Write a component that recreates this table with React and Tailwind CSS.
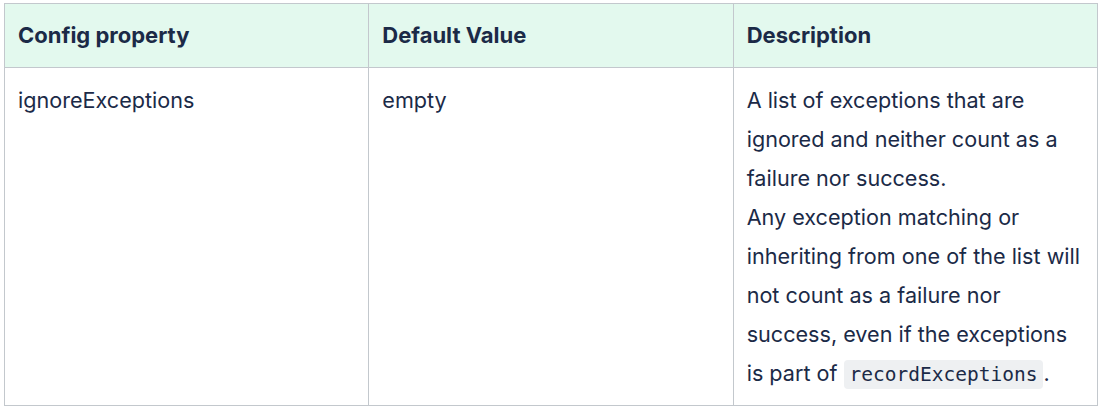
export default function App() {
  return (
    <div className="bg-white w-[1100px] h-[411px] pt-[3px] pl-[4px] font-['Inter',sans-serif] text-[#1b2a47]">
      <table className="w-[1094px] table-fixed border-collapse text-[21.6px] leading-[39px]">
        <thead>
          <tr className="bg-[#e3f9ee]">
            <th className="border border-[#c3c8cd] text-left font-bold text-[22px] px-[13px] py-[12px]">Config property</th>
            <th className="border border-[#c3c8cd] text-left font-bold text-[22px] px-[13px] py-[12px]">Default Value</th>
            <th className="border border-[#c3c8cd] text-left font-bold text-[22px] px-[13px] py-[12px]">Description</th>
          </tr>
        </thead>
        <tbody>
          <tr>
            <td className="border border-[#c3c8cd] align-top px-[13px] pt-[13px] pb-[11px]">ignoreExceptions</td>
            <td className="border border-[#c3c8cd] align-top px-[13px] pt-[13px] pb-[11px]">empty</td>
            <td className="border border-[#c3c8cd] align-top px-[13px] pt-[13px] pb-[11px]">
              A list of exceptions that are ignored and neither count as a failure nor success.
              <br />
              Any exception matching or inheriting from one of the list will not count as a failure nor success, even if the exceptions is part of{' '}
              <code className="bg-[#eef0f2] rounded-[4px] px-[6px] py-[3px] font-['DejaVu_Sans_Mono',monospace] text-[19.5px]">recordExceptions</code>.
            </td>
          </tr>
        </tbody>
      </table>
    </div>
  )
}
